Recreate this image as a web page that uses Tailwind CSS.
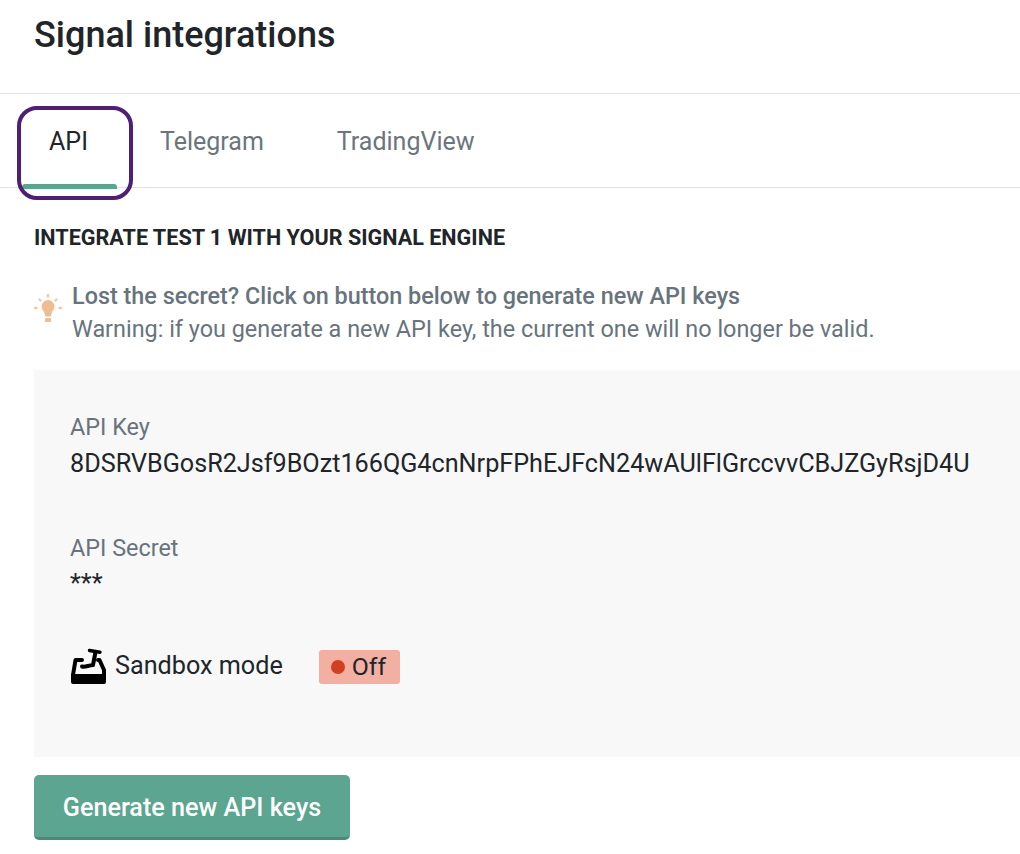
<!DOCTYPE html>
<html lang="en">
<head>
  <meta charset="UTF-8" />
  <title>Signal integrations</title>
  <script src="https://cdn.jsdelivr.net/npm/@tailwindcss/browser@4"></script>
</head>
<body class="bg-white text-[#212529] font-['Roboto',sans-serif] overflow-hidden">
<div class="w-[1020px] h-[854px] overflow-hidden">

  <!-- Header -->
  <div class="h-[94px] border-b border-[#e3e3e3] pl-[34px] pt-[13px]">
    <h1 class="text-[36px] leading-[44px] font-medium text-[#212529]">Signal integrations</h1>
  </div>

  <!-- Tabs -->
  <div class="h-[94px] border-b border-[#e3e3e3] pl-[22px] flex text-[25px] text-[#6c757d] relative">
    <div class="relative w-[93px] flex justify-center pt-[29px] text-[#212529]">
      API
      <div class="absolute left-0 right-[-2px] bottom-[-2px] h-[5px] bg-[#5ba58f] rounded-t-[3px]"></div>
      <div class="absolute left-[-5px] top-[12px] w-[116px] h-[94px] border-[4px] border-[#4f1f74] rounded-[20px]"></div>
    </div>
    <div class="ml-[45px] pt-[29px]">Telegram</div>
    <div class="ml-[73px] pt-[29px]">TradingView</div>
  </div>

  <div class="pl-[34px]">
    <h2 class="mt-[37px] text-[21.6px] leading-[26px] font-bold text-[#212529]">INTEGRATE TEST 1 WITH YOUR SIGNAL ENGINE</h2>

    <!-- Hint -->
    <div class="mt-[29px] flex items-start">
      <svg class="w-[28px] h-[30px] mt-[14px] mr-[10px] shrink-0" viewBox="0 0 28 30" fill="#f0bd93">
        <circle cx="14" cy="12.5" r="6.5" />
        <path d="M9.5 16h9l-1.8 6.5h-5.4z" />
        <rect x="11" y="24" width="6" height="4" rx="1" />
        <g stroke="#f3c7a3" stroke-width="2.4" stroke-linecap="round">
          <path d="M14 1v1.4" />
          <path d="M5.5 5.5l1 1" />
          <path d="M22.5 5.5l-1 1" />
          <path d="M.8 14h1.6" />
          <path d="M25.6 14h1.6" />
        </g>
      </svg>
      <div class="text-[23.4px] leading-[33px] text-[#68737d]">
        <p class="font-medium">Lost the secret? Click on button below to generate new API keys</p>
        <p>Warning: if you generate a new API key, the current one will no longer be valid.</p>
      </div>
    </div>

    <!-- Keys panel -->
    <div class="mt-[24px] h-[387px] bg-[#f8f8f8] pl-[36px] pt-[41px]">
      <div class="text-[23.4px] leading-[32px] text-[#68737d]">API Key</div>
      <div class="mt-[3px] text-[25.2px] leading-[36px] text-[#212529] whitespace-nowrap">8DSRVBGosR2Jsf9BOzt166QG4cnNrpFPhEJFcN24wAUlFlGrccvvCBJZGyRsjD4U</div>
      <div class="mt-[50px] text-[23.4px] leading-[32px] text-[#68737d]">API Secret</div>
      <div class="mt-[3px] text-[25.2px] leading-[34px] text-[#212529]">***</div>
      <div class="mt-[43px] flex items-center h-[44px]">
        <svg class="w-[37px] h-[36px] shrink-0" viewBox="0 0 37 36">
          <path d="M1 26h35v8a2 2 0 0 1-2 2H3a2 2 0 0 1-2-2z" fill="#000" />
          <g fill="none" stroke="#000" stroke-width="4" stroke-linejoin="round" stroke-linecap="round">
            <path d="M3 27L5.5 12h6.5" />
            <path d="M28 12h1.5L34 22v5" />
            <path d="M12 18.5c3 1 6-1 11-1.5L25.5 4" />
          </g>
          <path d="M19.5 2.5l10.5 1.8" fill="none" stroke="#000" stroke-width="3.4" stroke-linecap="round" />
        </svg>
        <span class="ml-[8px] text-[25.2px] text-[#212529]">Sandbox mode</span>
        <span class="ml-[36px] mt-[2px] h-[34px] w-[81px] rounded-[3px] bg-[#f3b0a2] flex items-center pl-[12px] text-[24.8px] text-[#212529]">
          <span class="w-[14px] h-[14px] rounded-full bg-[#d03f22] mr-[7px]"></span>Off
        </span>
      </div>
    </div>

    <button class="mt-[18px] w-[316px] h-[65px] pt-[4px] rounded-[5px] bg-[#5ca590] border-b-[3px] border-[#4c8a78] text-white text-[25.2px] font-medium">Generate new API keys</button>
  </div>
</div>
</body>
</html>
